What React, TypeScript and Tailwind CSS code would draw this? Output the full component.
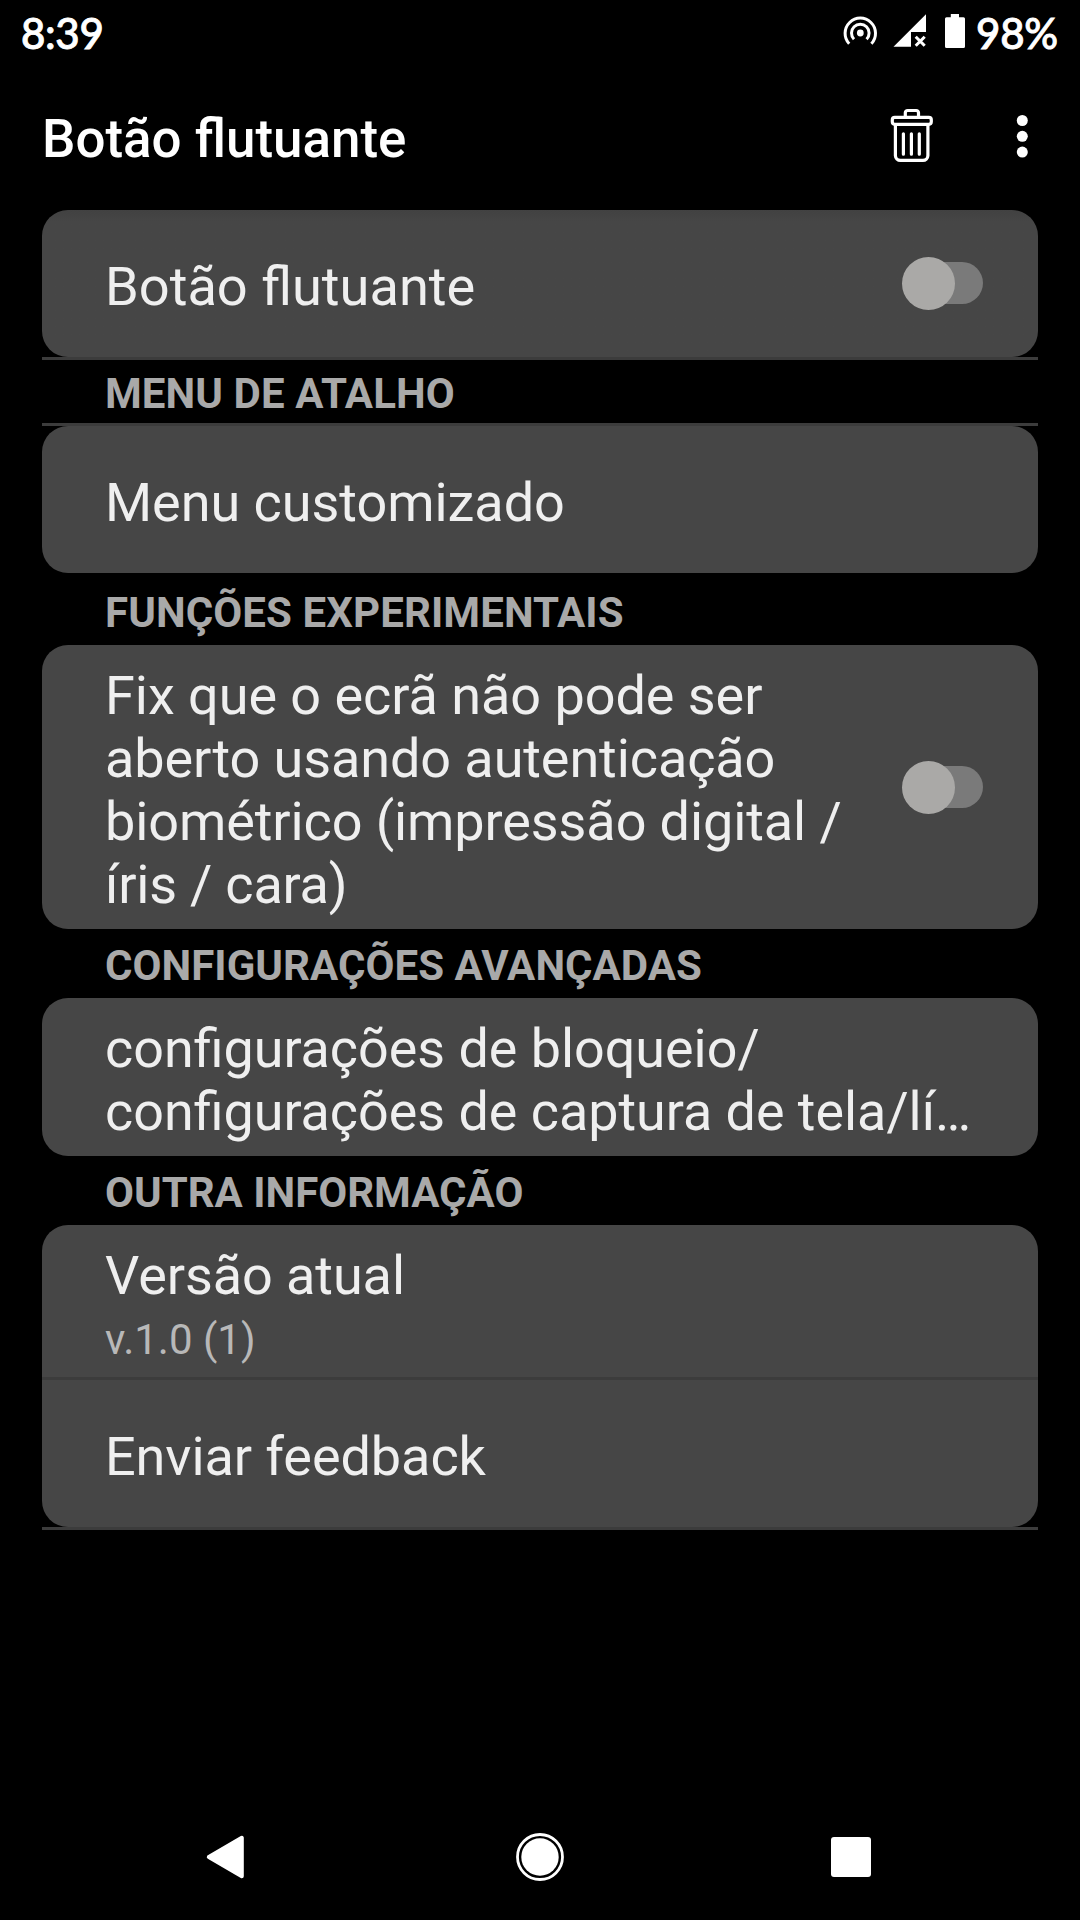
import { useState, type ReactNode } from "react";
import clsx from "clsx";

function HotspotIcon() {
  return (
    <svg width="36" height="36" viewBox="0 0 36 36" fill="none" stroke="white" strokeWidth="3">
      <path d="M7.2 28.7A15.2 15.2 0 1 1 29.4 28.7" />
      <path d="M12 24.2A8.8 8.8 0 1 1 24.6 24.2" />
      <circle cx="18.3" cy="18" r="3.4" fill="white" stroke="none" />
    </svg>
  );
}

function SignalIcon() {
  return (
    <svg width="33" height="33" viewBox="0 0 33 33" fill="none">
      <path d="M0.5 32.7L33 0.3V18H18V32.7Z" fill="white" />
      <path d="M22.7 22.7L31.7 31.7M31.7 22.7L22.7 31.7" stroke="white" strokeWidth="3" />
    </svg>
  );
}

function BatteryIcon() {
  return (
    <svg width="20" height="34" viewBox="0 0 20 34" fill="white">
      <path d="M5.8 0H14V3.3H18.5A1.5 1.5 0 0 1 20 4.8V32.5A1.5 1.5 0 0 1 18.5 34H1.5A1.5 1.5 0 0 1 0 32.5V4.8A1.5 1.5 0 0 1 1.5 3.3H5.8Z" />
    </svg>
  );
}

function TrashIcon() {
  return (
    <svg width="44" height="54" viewBox="0 0 44 54" fill="none" stroke="white" strokeWidth="3.2" strokeLinecap="round">
      <path d="M15.3 8V4.8A2.3 2.3 0 0 1 17.6 2.5H26.2A2.3 2.3 0 0 1 28.5 4.8V8" />
      <rect x="2.3" y="9.3" width="39" height="7" rx="2.5" />
      <path d="M5.4 16.5V47.6A5 5 0 0 0 10.4 52.4H32.9A5 5 0 0 0 37.9 47.6V16.5" />
      <path d="M13.4 25.8V46.2M21.4 25.8V46.2M29.3 25.8V46.2" />
    </svg>
  );
}

function MoreIcon() {
  return (
    <svg width="12" height="44" viewBox="0 0 12 44" fill="white">
      <circle cx="6.3" cy="6.5" r="5.5" />
      <circle cx="6.3" cy="22.3" r="5.5" />
      <circle cx="6.3" cy="38.1" r="5.5" />
    </svg>
  );
}

function StatusBar() {
  return (
    <div className="flex h-[66px] items-start pl-[21px] pr-[21px] font-['Lato',sans-serif] text-[42px] leading-[66px] font-medium text-white [-webkit-text-stroke:0.9px_white]">
      <span className="tracking-[-0.3px]">8:39</span>
      <div className="ml-auto flex items-start">
        <div className="mt-[15px]">
          <HotspotIcon />
        </div>
        <div className="mt-[14px] ml-[15px]">
          <SignalIcon />
        </div>
        <div className="mt-[14px] ml-[19px]">
          <BatteryIcon />
        </div>
        <span className="ml-[11px] w-[83px] tracking-[-0.2px]">98%</span>
      </div>
    </div>
  );
}

function Toggle({ on, onToggle }: { on: boolean; onToggle: () => void }) {
  return (
    <button
      onClick={onToggle}
      className="relative mr-[55px] flex h-[53px] w-[81px] shrink-0 items-start justify-end pt-[5px]"
    >
      <span className="h-[42px] w-[78px] rounded-full bg-[#7a7a7a]" />
      <span className={clsx("absolute top-0 size-[53px] rounded-full bg-[#aaa9a7]", on ? "right-0" : "left-0")} />
    </button>
  );
}

function SectionTitle({ className, children }: { className: string; children: ReactNode }) {
  return (
    <h2 className={clsx("pl-[63px] text-[42px] leading-[49px] font-bold text-[#a9a9a9]", className)}>
      {children}
    </h2>
  );
}

const Divider = () => <div className="h-[3px] bg-[#3c3c3c]" />;

export default function App() {
  const [floating, setFloating] = useState(false);
  const [biometricFix, setBiometricFix] = useState(false);

  return (
    <main className="flex h-[1920px] w-[1080px] flex-col bg-black font-['Roboto',sans-serif]">
      <StatusBar />

      {/* App bar */}
      <header className="flex h-[144px] items-start pl-[42px]">
        <h1 className="mt-[42px] text-[52.9px] leading-[62px] font-medium text-white">Botão flutuante</h1>
        <button className="mt-[42px] ml-auto">
          <TrashIcon />
        </button>
        <button className="mt-[48px] mr-[52px] ml-[82px]">
          <MoreIcon />
        </button>
      </header>

      <div className="mx-[42px] text-[54px] leading-[63px] text-[#efefef]">
        <div className="flex h-[147px] items-center rounded-[26px] bg-linear-to-b from-[#414141] to-[#464646] to-[12px] pl-[63px]">
          <span className="flex-1 pt-[6px] text-[54.2px]">Botão flutuante</span>
          <Toggle on={floating} onToggle={() => setFloating(!floating)} />
        </div>
        <Divider />

        <SectionTitle className="h-[63px] pt-[9px] tracking-[0.08px]">MENU DE ATALHO</SectionTitle>
        <Divider />
        <div className="h-[147px] rounded-[26px] bg-[#464646] pt-[45px] pl-[63px] tracking-[-0.04px]">
          Menu customizado
        </div>

        <SectionTitle className="h-[72px] pt-[15px] tracking-[0.1px]">FUNÇÕES EXPERIMENTAIS</SectionTitle>
        <div className="flex h-[284px] items-center rounded-[26px] bg-[#464646] pl-[63px]">
          <p className="flex-1 pt-[6px] tracking-[-0.1px]">
            <span className="tracking-[-0.04px]">Fix que o ecrã não pode ser</span>
            <br />
            aberto usando autenticação
            <br />
            biométrico (impressão digital /
            <br />
            <span className="tracking-[-0.2px]">íris / cara)</span>
          </p>
          <Toggle on={biometricFix} onToggle={() => setBiometricFix(!biometricFix)} />
        </div>

        <SectionTitle className="h-[69px] pt-[12px] tracking-[0.05px]">CONFIGURAÇÕES AVANÇADAS</SectionTitle>
        <div className="h-[158px] rounded-[26px] bg-[#464646] pt-[19px] pl-[63px] text-[53.85px] whitespace-nowrap">
          configurações de bloqueio/
          <br />
          configurações de captura de tela/lí…
        </div>

        <SectionTitle className="h-[69px] pt-[12px]">OUTRA INFORMAÇÃO</SectionTitle>
        <div className="h-[152px] rounded-t-[26px] bg-[#464646] pt-[19px] pl-[63px]">
          <p className="tracking-[-0.08px]">Versão atual</p>
          <p className="mt-[8px] text-[42px] leading-[49px] text-[#b8b8b8]">v.1.0 (1)</p>
        </div>
        <Divider />
        <div className="h-[147px] rounded-b-[26px] bg-[#464646] pt-[45px] pl-[63px] tracking-[-0.08px]">
          Enviar feedback
        </div>
        <Divider />
      </div>

      {/* Navigation bar */}
      <nav className="mt-auto flex h-[126px] items-center pl-[206px]">
        <svg width="38" height="44" viewBox="0 0 38 44" fill="white" stroke="white" strokeWidth="4" strokeLinejoin="round">
          <path d="M2.8 22L35.8 2.8V41.2Z" />
        </svg>
        <svg className="ml-[272px]" width="48" height="48" viewBox="0 0 48 48" fill="none">
          <circle cx="24" cy="24" r="22.5" stroke="white" strokeWidth="2.8" />
          <circle cx="24" cy="24" r="18.7" fill="white" />
        </svg>
        <div className="ml-[267px] size-[40px] rounded-[3px] bg-white" />
      </nav>
    </main>
  );
}
